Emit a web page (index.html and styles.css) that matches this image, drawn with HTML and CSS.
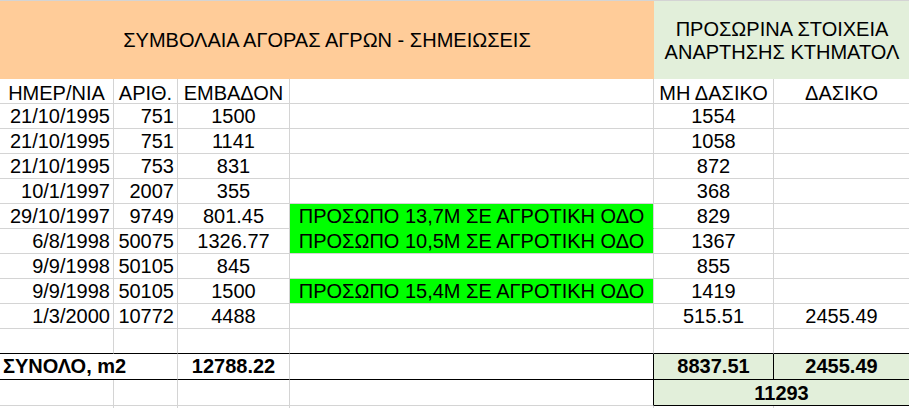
FILE: index.html
```html
<!DOCTYPE html>
<html lang="el">
<head>
<meta charset="utf-8">
<title>Συμβόλαια αγοράς αγρών</title>
<link rel="stylesheet" href="styles.css">
</head>
<body>
<div class="sheet">
  <div class="hdr hdr-orange">ΣΥΜΒΟΛΑΙΑ ΑΓΟΡΑΣ ΑΓΡΩΝ - ΣΗΜΕΙΩΣΕΙΣ</div>
  <div class="hdr hdr-green">ΠΡΟΣΩΡΙΝΑ ΣΤΟΙΧΕΙΑ<br>ΑΝΑΡΤΗΣΗΣ ΚΤΗΜΑΤΟΛ</div>

  <div class="c ctr colhead">ΗΜΕΡ/ΝΙΑ</div>
  <div class="c ctr colhead">ΑΡΙΘ.</div>
  <div class="c ctr colhead">ΕΜΒΑΔΟΝ</div>
  <div class="c colhead"></div>
  <div class="c ctr colhead">ΜΗ ΔΑΣΙΚΟ</div>
  <div class="c ctr colhead">ΔΑΣΙΚΟ</div>

  <div class="c r">21/10/1995</div><div class="c r">751</div><div class="c ctr">1500</div><div class="c"></div><div class="c ctr">1554</div><div class="c"></div>
  <div class="c r">21/10/1995</div><div class="c r">751</div><div class="c ctr">1141</div><div class="c"></div><div class="c ctr">1058</div><div class="c"></div>
  <div class="c r">21/10/1995</div><div class="c r">753</div><div class="c ctr">831</div><div class="c"></div><div class="c ctr">872</div><div class="c"></div>
  <div class="c r">10/1/1997</div><div class="c r">2007</div><div class="c ctr">355</div><div class="c"></div><div class="c ctr">368</div><div class="c"></div>
  <div class="c r">29/10/1997</div><div class="c r">9749</div><div class="c ctr">801.45</div><div class="c ctr note note-top">ΠΡΟΣΩΠΟ 13,7Μ ΣΕ ΑΓΡΟΤΙΚΗ ΟΔΟ</div><div class="c ctr">829</div><div class="c"></div>
  <div class="c r">6/8/1998</div><div class="c r">50075</div><div class="c ctr">1326.77</div><div class="c ctr note">ΠΡΟΣΩΠΟ 10,5Μ ΣΕ ΑΓΡΟΤΙΚΗ ΟΔΟ</div><div class="c ctr">1367</div><div class="c"></div>
  <div class="c r">9/9/1998</div><div class="c r">50105</div><div class="c ctr">845</div><div class="c"></div><div class="c ctr">855</div><div class="c"></div>
  <div class="c r">9/9/1998</div><div class="c r">50105</div><div class="c ctr">1500</div><div class="c ctr note">ΠΡΟΣΩΠΟ 15,4Μ ΣΕ ΑΓΡΟΤΙΚΗ ΟΔΟ</div><div class="c ctr">1419</div><div class="c"></div>
  <div class="c r">1/3/2000</div><div class="c r">10772</div><div class="c ctr">4488</div><div class="c"></div><div class="c ctr">515.51</div><div class="c ctr">2455.49</div>
  <div class="c bb"></div><div class="c bb"></div><div class="c bb"></div><div class="c bb"></div><div class="c bb"></div><div class="c bb"></div>

  <div class="c bb b total-label">ΣΥΝΟΛΟ, m2</div>
  <div class="c bb b ctr">12788.22</div>
  <div class="c bb br"></div>
  <div class="c bb br b ctr tot">8837.51</div>
  <div class="c bb br b ctr tot">2455.49</div>

  <div class="c"></div><div class="c"></div><div class="c"></div><div class="c br"></div>
  <div class="c bb br b ctr tot grand">11293</div>

  <div class="c stub"></div><div class="c stub"></div><div class="c stub"></div><div class="c stub"></div><div class="c stub"></div><div class="c stub"></div>
</div>
</body>
</html>
```
FILE: styles.css
```css
html, body {
  margin: 0;
  padding: 0;
  background: #ffffff;
  overflow: hidden;
}

body {
  width: 909px;
  height: 408px;
  font-family: "Liberation Sans", Arial, sans-serif;
  font-size: 20px;
  color: #000000;
}

.sheet {
  display: grid;
  grid-template-columns: 114px 64px 112px 364px 120px 136px;
  grid-template-rows: 78px repeat(11, 25px) 26px 26px 2px;
  border-top: 1px solid #d4d4d4;
  width: 910px;
  height: 408px;
  box-sizing: border-box;
}

.hdr {
  display: flex;
  align-items: center;
  justify-content: center;
  text-align: center;
  line-height: 23px;
}

.hdr-orange {
  grid-column: 1 / 5;
  background: #ffcc99;
}

.hdr-green {
  grid-column: 5 / 7;
  background: #e2efda;
  padding-top: 1px;
}

.c {
  box-sizing: border-box;
  border-right: 1px solid #d4d4d4;
  border-bottom: 1px solid #d4d4d4;
  line-height: 24px;
  white-space: nowrap;
  padding: 0 3px;
}

.colhead {
  padding-top: 2px;
}

.ctr { text-align: center; }
.r { text-align: right; }
.b { font-weight: bold; }

.note {
  background: #00ff00;
}

.note-top {
  border-bottom-color: #00ff00;
}

.bb { border-bottom-color: #000000; }
.br { border-right-color: #000000; }

.total-label {
  grid-column: 1 / 3;
  padding-left: 3px;
}

.tot {
  background: #e2efda;
}

.grand {
  grid-column: 5 / 7;
  padding-top: 1px;
}

.stub {
  border-bottom-width: 0;
}
```
